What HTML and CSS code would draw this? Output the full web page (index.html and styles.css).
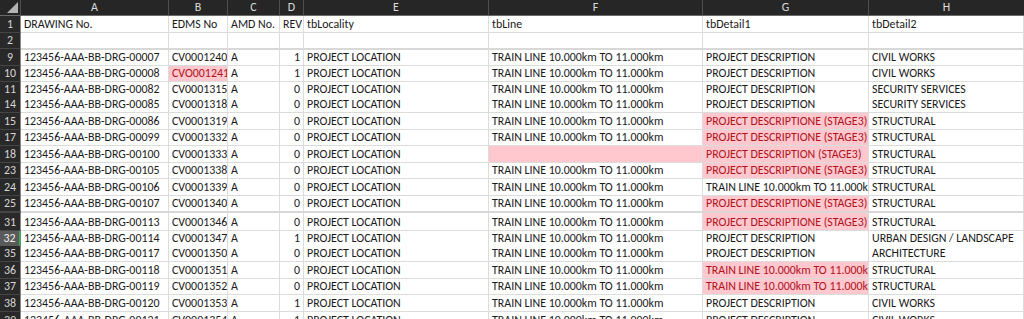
FILE: index.html
```html
<!DOCTYPE html>
<html>
<head>
<meta charset="utf-8">
<link rel="stylesheet" href="styles.css">
</head>
<body>
<div class="sheet">
  <div class="row colhead">
    <div class="corner"><span class="tri"></span></div>
    <div class="ch">A</div><div class="ch">B</div><div class="ch">C</div><div class="ch">D</div>
    <div class="ch">E</div><div class="ch">F</div><div class="ch">G</div><div class="ch last">H</div>
  </div>

  <div class="row h17">
    <div class="rh">1</div>
    <div class="c">DRAWING No.</div><div class="c">EDMS No</div><div class="c">AMD No.</div><div class="c">REV</div>
    <div class="c">tbLocality</div><div class="c">tbLine</div><div class="c">tbDetail1</div><div class="c">tbDetail2</div>
  </div>
  <div class="row h16 gap">
    <div class="rh">2</div>
    <div class="c"></div><div class="c"></div><div class="c"></div><div class="c"></div>
    <div class="c"></div><div class="c"></div><div class="c"></div><div class="c"></div>
  </div>
  <div class="row h17">
    <div class="rh">9</div>
    <div class="c">123456-AAA-BB-DRG-00007</div><div class="c">CV0001240</div><div class="c">A</div><div class="c num">1</div>
    <div class="c">PROJECT LOCATION</div><div class="c">TRAIN LINE 10.000km TO 11.000km</div><div class="c">PROJECT DESCRIPTION</div><div class="c">CIVIL WORKS</div>
  </div>
  <div class="row h16">
    <div class="rh">10</div>
    <div class="c">123456-AAA-BB-DRG-00008</div><div class="c bad">CVO001241</div><div class="c">A</div><div class="c num">1</div>
    <div class="c">PROJECT LOCATION</div><div class="c">TRAIN LINE 10.000km TO 11.000km</div><div class="c">PROJECT DESCRIPTION</div><div class="c">CIVIL WORKS</div>
  </div>
  <div class="row h15 nob">
    <div class="rh">11</div>
    <div class="c">123456-AAA-BB-DRG-00082</div><div class="c">CV0001315</div><div class="c">A</div><div class="c num">0</div>
    <div class="c">PROJECT LOCATION</div><div class="c">TRAIN LINE 10.000km TO 11.000km</div><div class="c">PROJECT DESCRIPTION</div><div class="c">SECURITY SERVICES</div>
  </div>
  <div class="row h16">
    <div class="rh">14</div>
    <div class="c">123456-AAA-BB-DRG-00085</div><div class="c">CV0001318</div><div class="c">A</div><div class="c num">0</div>
    <div class="c">PROJECT LOCATION</div><div class="c">TRAIN LINE 10.000km TO 11.000km</div><div class="c">PROJECT DESCRIPTION</div><div class="c">SECURITY SERVICES</div>
  </div>
  <div class="row h17">
    <div class="rh">15</div>
    <div class="c">123456-AAA-BB-DRG-00086</div><div class="c">CV0001319</div><div class="c">A</div><div class="c num">0</div>
    <div class="c">PROJECT LOCATION</div><div class="c">TRAIN LINE 10.000km TO 11.000km</div><div class="c bad">PROJECT DESCRIPTIONE (STAGE3)</div><div class="c">STRUCTURAL</div>
  </div>
  <div class="row h16">
    <div class="rh">17</div>
    <div class="c">123456-AAA-BB-DRG-00099</div><div class="c">CV0001332</div><div class="c">A</div><div class="c num">0</div>
    <div class="c">PROJECT LOCATION</div><div class="c">TRAIN LINE 10.000km TO 11.000km</div><div class="c bad">PROJECT DESCRIPTIONE (STAGE3)</div><div class="c">STRUCTURAL</div>
  </div>
  <div class="row h17">
    <div class="rh">18</div>
    <div class="c">123456-AAA-BB-DRG-00100</div><div class="c">CV0001333</div><div class="c">A</div><div class="c num">0</div>
    <div class="c">PROJECT LOCATION</div><div class="c bad"></div><div class="c bad">PROJECT DESCRIPTION (STAGE3)</div><div class="c">STRUCTURAL</div>
  </div>
  <div class="row h16">
    <div class="rh">23</div>
    <div class="c">123456-AAA-BB-DRG-00105</div><div class="c">CV0001338</div><div class="c">A</div><div class="c num">0</div>
    <div class="c">PROJECT LOCATION</div><div class="c">TRAIN LINE 10.000km TO 11.000km</div><div class="c bad">PROJECT DESCRIPTIONE (STAGE3)</div><div class="c">STRUCTURAL</div>
  </div>
  <div class="row h17">
    <div class="rh">24</div>
    <div class="c">123456-AAA-BB-DRG-00106</div><div class="c">CV0001339</div><div class="c">A</div><div class="c num">0</div>
    <div class="c">PROJECT LOCATION</div><div class="c">TRAIN LINE 10.000km TO 11.000km</div><div class="c">TRAIN LINE 10.000km TO 11.000km</div><div class="c">STRUCTURAL</div>
  </div>
  <div class="row h17 gap">
    <div class="rh">25</div>
    <div class="c">123456-AAA-BB-DRG-00107</div><div class="c">CV0001340</div><div class="c">A</div><div class="c num">0</div>
    <div class="c">PROJECT LOCATION</div><div class="c">TRAIN LINE 10.000km TO 11.000km</div><div class="c bad">PROJECT DESCRIPTIONE (STAGE3)</div><div class="c">STRUCTURAL</div>
  </div>
  <div class="row h18">
    <div class="rh">31</div>
    <div class="c">123456-AAA-BB-DRG-00113</div><div class="c">CV0001346</div><div class="c">A</div><div class="c num">0</div>
    <div class="c">PROJECT LOCATION</div><div class="c">TRAIN LINE 10.000km TO 11.000km</div><div class="c bad">PROJECT DESCRIPTIONE (STAGE3)</div><div class="c">STRUCTURAL</div>
  </div>
  <div class="row h15 nob">
    <div class="rh sel">32</div>
    <div class="c">123456-AAA-BB-DRG-00114</div><div class="c">CV0001347</div><div class="c">A</div><div class="c num">1</div>
    <div class="c">PROJECT LOCATION</div><div class="c">TRAIN LINE 10.000km TO 11.000km</div><div class="c">PROJECT DESCRIPTION</div><div class="c">URBAN DESIGN / LANDSCAPE</div>
  </div>
  <div class="row h16">
    <div class="rh">35</div>
    <div class="c">123456-AAA-BB-DRG-00117</div><div class="c">CV0001350</div><div class="c">A</div><div class="c num">0</div>
    <div class="c">PROJECT LOCATION</div><div class="c">TRAIN LINE 10.000km TO 11.000km</div><div class="c">PROJECT DESCRIPTION</div><div class="c">ARCHITECTURE</div>
  </div>
  <div class="row h17">
    <div class="rh">36</div>
    <div class="c">123456-AAA-BB-DRG-00118</div><div class="c">CV0001351</div><div class="c">A</div><div class="c num">0</div>
    <div class="c">PROJECT LOCATION</div><div class="c">TRAIN LINE 10.000km TO 11.000km</div><div class="c bad">TRAIN LINE 10.000km TO 11.000km</div><div class="c">STRUCTURAL</div>
  </div>
  <div class="row h16">
    <div class="rh">37</div>
    <div class="c">123456-AAA-BB-DRG-00119</div><div class="c">CV0001352</div><div class="c">A</div><div class="c num">0</div>
    <div class="c">PROJECT LOCATION</div><div class="c">TRAIN LINE 10.000km TO 11.000km</div><div class="c bad">TRAIN LINE 10.000km TO 11.000km</div><div class="c">STRUCTURAL</div>
  </div>
  <div class="row h17">
    <div class="rh">38</div>
    <div class="c">123456-AAA-BB-DRG-00120</div><div class="c">CV0001353</div><div class="c">A</div><div class="c num">1</div>
    <div class="c">PROJECT LOCATION</div><div class="c">TRAIN LINE 10.000km TO 11.000km</div><div class="c">PROJECT DESCRIPTION</div><div class="c">CIVIL WORKS</div>
  </div>
  <div class="row h17">
    <div class="rh">39</div>
    <div class="c">123456-AAA-BB-DRG-00121</div><div class="c">CV0001354</div><div class="c">A</div><div class="c num">1</div>
    <div class="c">PROJECT LOCATION</div><div class="c">TRAIN LINE 10.000km TO 11.000km</div><div class="c">PROJECT DESCRIPTION</div><div class="c">CIVIL WORKS</div>
  </div>
</div>
</body>
</html>
```

FILE: styles.css
```css
* { box-sizing: border-box; }
html, body {
  margin: 0;
  padding: 0;
  background: #ffffff;
  overflow: hidden;
}
body {
  width: 1024px;
  height: 319px;
  font-family: Carlito, Calibri, "Liberation Sans Narrow", "Liberation Sans", sans-serif;
  font-size: 11.9px;
  color: #1a1a1a;
}
.sheet {
  display: flex;
  flex-direction: column;
  width: 1024px;
}
.row {
  display: grid;
  grid-template-columns: 21px 148px 59px 52px 24px 185px 214px 166px 155px;
}
.h15 { height: 15px; }
.h16 { height: 16px; }
.h17 { height: 17px; }
.h18 { height: 18px; }

.colhead {
  height: 16px;
  background: #262626;
}
.corner {
  position: relative;
  border-right: 1px solid #4e4e4e;
  border-bottom: 1px solid #6a6a6a;
}
.tri {
  position: absolute;
  right: 2px;
  bottom: 2px;
  width: 0;
  height: 0;
  border-left: 11px solid transparent;
  border-bottom: 11px solid #b4b4b4;
}
.ch {
  color: #dcdcdc;
  text-align: center;
  line-height: 15px;
  font-size: 11.9px;
  border-right: 1px solid #4e4e4e;
  border-bottom: 1px solid #6a6a6a;
}
.ch.last { border-right: none; }

.rh {
  background: #292929;
  color: #d6d6d6;
  text-align: center;
  font-size: 11.9px;
  display: flex;
  align-items: flex-end;
  justify-content: center;
  line-height: 15px;
  border-bottom: 1px solid #454545;
  border-right: 1px solid #8a8a8a;
}
.rh.sel {
  background: #5a5a5a;
  color: #f0f0f0;
  border-right: 2px solid #3fa55c;
}
.c {
  display: flex;
  align-items: flex-end;
  padding: 0 3px 0 3px;
  line-height: 15px;
  white-space: nowrap;
  overflow: hidden;
  border-right: 1px solid #dcdcdc;
  border-bottom: 1px solid #dcdcdc;
}
.c.num { justify-content: flex-end; }
.c.bad {
  background: #ffc7ce;
  color: #b0121b;
}
.nob .c { border-bottom-color: transparent; }
.nob .rh { border-bottom-color: transparent; }
.gap .c { border-bottom: 2px solid #d8d8d8; }
.gap .rh { border-bottom: 2px solid #454545; }
```
